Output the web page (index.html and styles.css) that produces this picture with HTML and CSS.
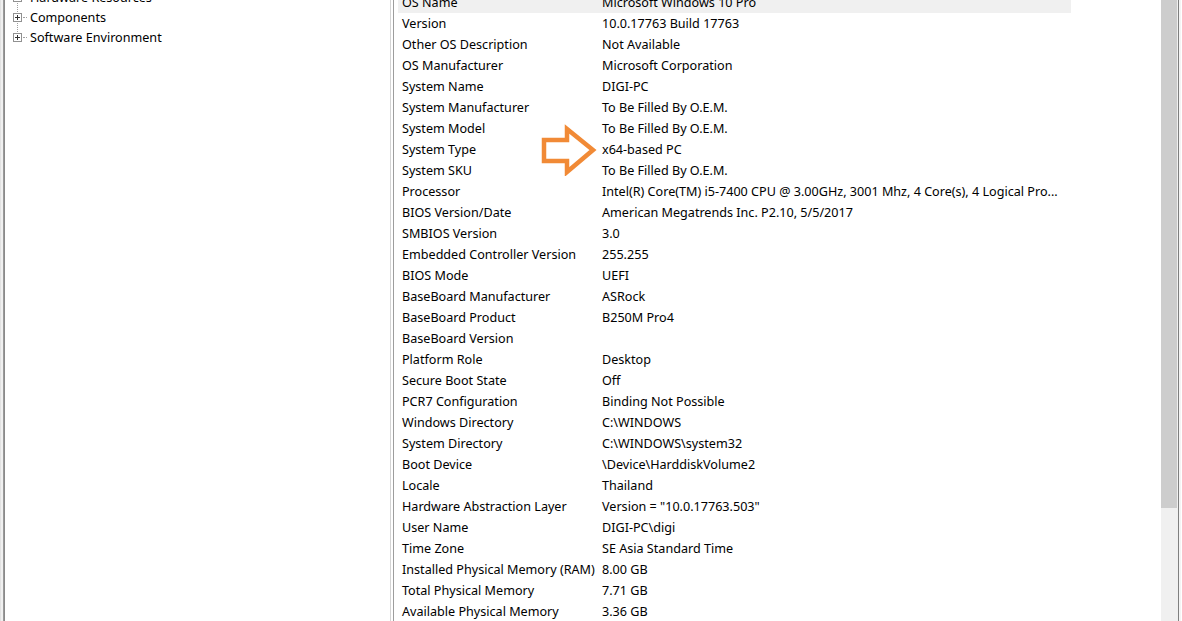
FILE: index.html
```html
<!DOCTYPE html>
<html lang="en">
<head>
    <meta charset="UTF-8">
    <title>System Information</title>
    <link rel="stylesheet" href="styles.css">
</head>
<body>

<div class="window">
    <div class="edge-left"></div>

    <div class="tree-pane">
        <ul class="tree">
            <li class="node">
                <span class="gutter"><span class="expander"></span><span class="dots"></span></span>
                <span class="node-label">Hardware Resources</span>
            </li>
            <li class="node">
                <span class="gutter"><span class="expander"></span><span class="dots"></span></span>
                <span class="node-label">Components</span>
            </li>
            <li class="node last">
                <span class="gutter"><span class="expander"></span><span class="dots"></span></span>
                <span class="node-label">Software Environment</span>
            </li>
        </ul>
    </div>

    <div class="splitter"></div>

    <div class="list-pane">
        <table class="summary">
            <tr class="selected"><td>OS Name</td><td>Microsoft Windows 10 Pro</td></tr>
            <tr><td>Version</td><td>10.0.17763 Build 17763</td></tr>
            <tr><td>Other OS Description</td><td>Not Available</td></tr>
            <tr><td>OS Manufacturer</td><td>Microsoft Corporation</td></tr>
            <tr><td>System Name</td><td>DIGI-PC</td></tr>
            <tr><td>System Manufacturer</td><td>To Be Filled By O.E.M.</td></tr>
            <tr><td>System Model</td><td>To Be Filled By O.E.M.</td></tr>
            <tr><td>System Type</td><td>x64-based PC</td></tr>
            <tr><td>System SKU</td><td>To Be Filled By O.E.M.</td></tr>
            <tr><td>Processor</td><td>Intel(R) Core(TM) i5-7400 CPU @ 3.00GHz, 3001 Mhz, 4 Core(s), 4 Logical Pro...</td></tr>
            <tr><td>BIOS Version/Date</td><td>American Megatrends Inc. P2.10, 5/5/2017</td></tr>
            <tr><td>SMBIOS Version</td><td>3.0</td></tr>
            <tr><td>Embedded Controller Version</td><td>255.255</td></tr>
            <tr><td>BIOS Mode</td><td>UEFI</td></tr>
            <tr><td>BaseBoard Manufacturer</td><td>ASRock</td></tr>
            <tr><td>BaseBoard Product</td><td>B250M Pro4</td></tr>
            <tr><td>BaseBoard Version</td><td></td></tr>
            <tr><td>Platform Role</td><td>Desktop</td></tr>
            <tr><td>Secure Boot State</td><td>Off</td></tr>
            <tr><td>PCR7 Configuration</td><td>Binding Not Possible</td></tr>
            <tr><td>Windows Directory</td><td>C:\WINDOWS</td></tr>
            <tr><td>System Directory</td><td>C:\WINDOWS\system32</td></tr>
            <tr><td>Boot Device</td><td>\Device\HarddiskVolume2</td></tr>
            <tr><td>Locale</td><td>Thailand</td></tr>
            <tr><td>Hardware Abstraction Layer</td><td>Version = "10.0.17763.503"</td></tr>
            <tr><td>User Name</td><td>DIGI-PC\digi</td></tr>
            <tr><td>Time Zone</td><td>SE Asia Standard Time</td></tr>
            <tr><td>Installed Physical Memory (RAM)</td><td>8.00 GB</td></tr>
            <tr><td>Total Physical Memory</td><td>7.71 GB</td></tr>
            <tr><td>Available Physical Memory</td><td>3.36 GB</td></tr>
            <tr><td>Total Virtual Memory</td><td>9.08 GB</td></tr>
        </table>

        <!-- annotation arrow pointing at System Type -->
        <svg class="pointer" width="60" height="52" viewBox="0 0 60 52">
            <path d="M5 16 H28 V5 L54 26 L28 48 V37 H5 Z" fill="none" stroke="#f18a36" stroke-width="4.5" stroke-linejoin="miter"/>
        </svg>
    </div>

    <div class="scrollbar">
        <div class="thumb"></div>
    </div>
    <div class="edge-right"></div>
</div>

</body>
</html>
```

FILE: styles.css
```css
body {
    margin: 0;
    background-color: #fff;
    font-family: "Noto Sans", "DejaVu Sans", sans-serif;
    font-size: 12.6px;
    color: #000;
    overflow: hidden;
}
.window {
    display: flex;
    height: 621px;
    overflow: hidden;
}
.edge-left {
    width: 2px;
    border-left: 1px solid #e2e2e2;
    border-right: 1px solid #9a9a9a;
    background-color: #f0f0f0;
    flex-shrink: 0;
}
.tree-pane {
    width: 385px;
    flex-shrink: 0;
    border-left: 1px solid #8a8a8a;
    background-color: #fff;
}
.tree {
    list-style: none;
    margin: -13px 0 0 0;
    padding: 0 0 0 8px;
}
.node {
    display: flex;
    align-items: center;
    height: 20px;
}
.gutter {
    display: flex;
    align-items: center;
    width: 16px;
    height: 20px;
    background-image: repeating-linear-gradient(to bottom, #a0a0a0 0 1px, transparent 1px 2px);
    background-size: 1px 100%;
    background-position: 4px 0;
    background-repeat: no-repeat;
}
.node.last .gutter {
    background-size: 1px 10px;
}
.expander {
    position: relative;
    width: 7px;
    height: 7px;
    border: 1px solid #919191;
    background-color: #fff;
}
.expander::before {
    content: "";
    position: absolute;
    left: 1px;
    top: 3px;
    width: 5px;
    height: 1px;
    background-color: #333;
}
.expander::after {
    content: "";
    position: absolute;
    left: 3px;
    top: 1px;
    width: 1px;
    height: 5px;
    background-color: #333;
}
.dots {
    width: 4px;
    height: 0;
    margin-left: 1px;
    border-top: 1px dotted #a0a0a0;
}
.node-label {
    padding-left: 1px;
    white-space: nowrap;
}
.splitter {
    width: 2px;
    flex-shrink: 0;
    border-left: 1px solid #d4d4d4;
    border-right: 1px solid #9d9d9d;
    background-color: #fff;
}
.list-pane {
    position: relative;
    width: 764px;
    flex-shrink: 0;
    padding-left: 3px;
    background-color: #fff;
}
.summary {
    border-collapse: collapse;
    margin-top: -8px;
    margin-left: 1px;
    width: 673px;
    table-layout: fixed;
}
.summary td {
    height: 21px;
    padding: 0 4px;
    white-space: nowrap;
    overflow: hidden;
}
.summary td:first-child {
    width: 192px;
}
.summary tr.selected td {
    background-color: #f0f0f0;
}
.pointer {
    position: absolute;
    left: 145px;
    top: 124px;
}
.scrollbar {
    width: 16px;
    flex-shrink: 0;
    background-color: #f0f0f0;
    padding-right: 1px;
}
.thumb {
    height: 508px;
    background-color: #cdcdcd;
}
.edge-right {
    width: 2px;
    flex-shrink: 0;
    border-left: 1px solid #7f7f7f;
    background-color: #f4f4f4;
}
```
